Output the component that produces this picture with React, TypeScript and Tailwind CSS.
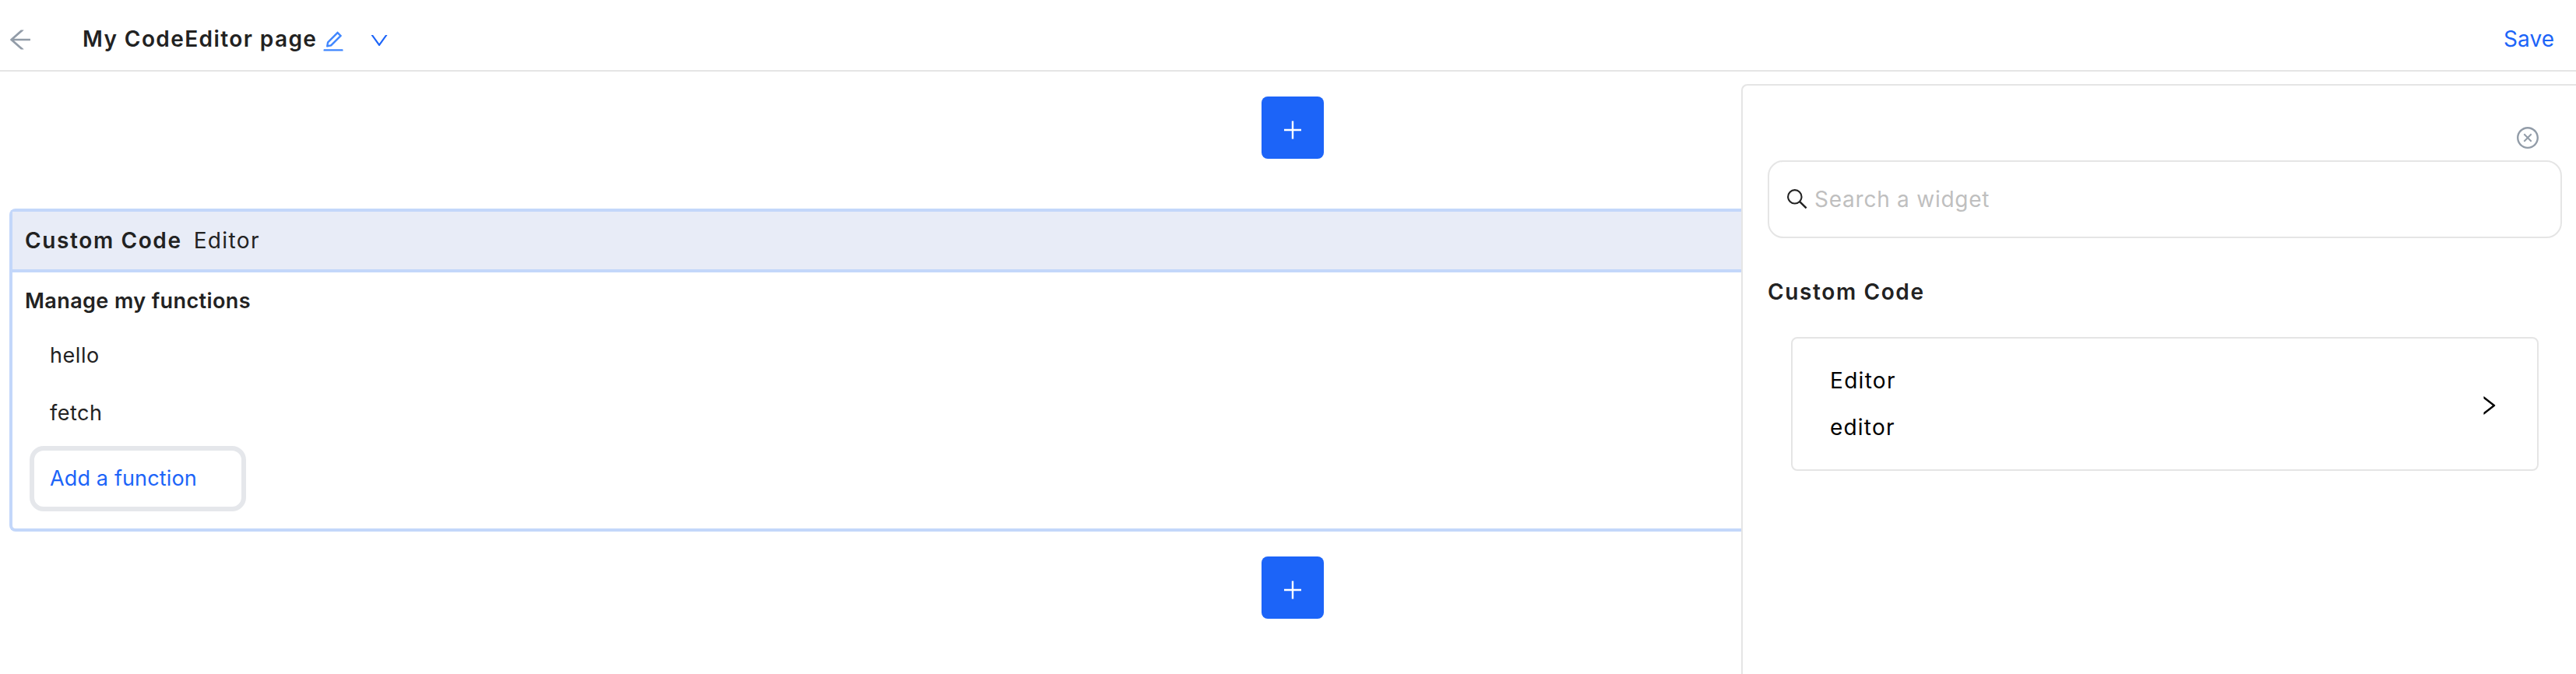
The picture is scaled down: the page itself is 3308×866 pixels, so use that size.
import React from "react";
import {
  AiOutlineArrowLeft,
  AiOutlineCloseCircle,
  AiOutlineDown,
  AiOutlineEdit,
  AiOutlineRight,
} from "react-icons/ai";

function AddButton() {
  return (
    <button
      aria-label="Add"
      className="flex size-20 items-center justify-center rounded-lg bg-[#1c64f8] pt-1.5"
    >
      <svg width="24" height="24" viewBox="0 0 24 24" stroke="white" strokeWidth="2.4">
        <path d="M12 0.4V23.6M1 12H23" />
      </svg>
    </button>
  );
}

function Header() {
  return (
    <header className="flex h-[92px] shrink-0 items-center border-b-2 border-[#e5e5e5] pt-2.5 pr-7 pl-2">
      <AiOutlineArrowLeft className="mt-0.5 size-9 text-[#929ca8]" />
      <h1 className="ml-[62px] text-[28px] leading-10 font-semibold tracking-[1.42px] whitespace-nowrap">
        My CodeEditor page
      </h1>
      <AiOutlineEdit className="mt-1.5 ml-[5px] size-8 text-[#3f86ff]" />
      <AiOutlineDown className="mt-1 ml-[29px] size-7 text-[#1c64f8]" />
      <button className="ml-auto text-[28px] leading-10 tracking-[0.03px] text-[#1c64f8]">
        Save
      </button>
    </header>
  );
}

function EditorCard() {
  return (
    <section className="h-[415px] w-full rounded-l-lg border-4 border-r-0 border-[#c3d7fa]">
      <div className="flex h-[78px] items-center gap-[15px] border-b-4 border-[#c3d7fa] bg-[#e8ecf7] px-4 text-[28px] leading-10">
        <span className="font-semibold tracking-[1.62px]">Custom Code</span>
        <span className="tracking-[1.38px]">Editor</span>
      </div>
      <div className="flex flex-col items-start pt-[17px] pl-4 text-[27px] leading-10">
        <h2 className="font-semibold tracking-[0.4px]">Manage my functions</h2>
        <div className="mt-[30px] ml-8 tracking-[0.55px]">hello</div>
        <div className="mt-[34px] ml-8 tracking-[0.5px]">fetch</div>
        <button className="mt-[22px] ml-1.5 flex h-[84px] w-[278px] items-center rounded-[18px] border-[6px] border-[#e5e7eb] pl-5 tracking-[0.14px] text-[#1c64f8]">
          Add a function
        </button>
      </div>
    </section>
  );
}

function WidgetPanel() {
  return (
    <aside className="absolute top-4 right-0 bottom-0 flex w-[1072px] flex-col rounded-tl-lg border-t-2 border-l-2 border-[#e5e5e5] bg-white pl-8">
      <button aria-label="Close" className="mt-[51px] mr-[46px] self-end">
        <AiOutlineCloseCircle className="size-8 text-[#929ca8]" />
      </button>
      <label className="mt-[13px] mr-[18px] flex h-[100px] items-center rounded-[20px] border-2 border-[#e5e5e5] pl-[22px]">
        <svg width="28" height="28" viewBox="0 0 28 28" fill="none" stroke="#222" strokeWidth="2.1">
          <circle cx="10.8" cy="10.8" r="8.7" />
          <path d="M16.9 16.9L25.6 25.4" strokeWidth="2.5" />
        </svg>
        <span className="ml-2 text-[28px] leading-10 tracking-[0.76px] text-[#bfbfbf]">
          Search a widget
        </span>
      </label>
      <h2 className="mt-[49px] text-[28px] leading-10 font-semibold tracking-[1.62px]">
        Custom Code
      </h2>
      <div className="mt-[38px] mr-12 ml-[30px] flex h-[172px] items-center justify-between rounded-lg border-2 border-[#e5e5e5] pr-[46px] pl-12 text-black">
        <div className="text-[28px] leading-[60px]">
          <div className="tracking-[1.3px]">Editor</div>
          <div className="tracking-[1.2px]">editor</div>
        </div>
        <AiOutlineRight className="mt-1 size-8" />
      </div>
    </aside>
  );
}

export default function App() {
  return (
    <div className="flex h-[866px] flex-col overflow-hidden bg-white font-['Inter',sans-serif] text-[#222222]">
      <Header />
      <div className="relative flex-1">
        <main className="flex flex-col items-center pt-8 pl-3">
          <AddButton />
          <div className="mt-16 mb-8 w-full">
            <EditorCard />
          </div>
          <AddButton />
        </main>
        <WidgetPanel />
      </div>
    </div>
  );
}
